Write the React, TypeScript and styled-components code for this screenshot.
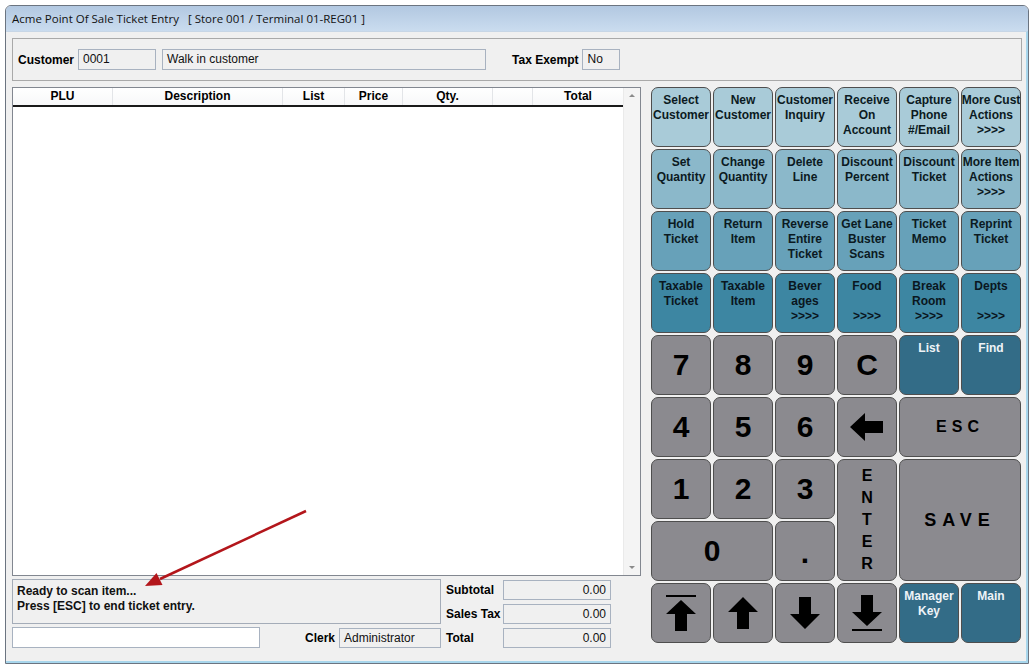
import React from "react";
import styled, { createGlobalStyle } from "styled-components";

const Global = createGlobalStyle`
  html, body { margin: 0; padding: 0; background: #ffffff; }
  body { font-family: "Liberation Sans", Arial, sans-serif; font-size: 12px; color: #000; }
`;

const Page = styled.div`
  position: relative;
  width: 1031px;
  height: 668px;
  overflow: hidden;
`;

const Window = styled.div`
  margin: 5px 0 0 5px;
  width: 1022px;
  height: 657px;
  border: 1px solid #6b7480;
  border-radius: 6px 6px 0 0;
  display: flex;
  flex-direction: column;
  background: #f0f0f0;
`;

const TitleBar = styled.div`
  height: 25px;
  flex: none;
  border-radius: 5px 5px 0 0;
  background: linear-gradient(#b2c8e1, #cadcef);
  display: flex;
  align-items: center;
  padding-left: 6px;
  font-family: "Open Sans", "Noto Sans", sans-serif;
  font-size: 11.5px;
  color: #111;
  white-space: pre;
`;

const Body = styled.div`
  flex: 1;
  display: flex;
  flex-direction: column;
  gap: 6px;
  padding: 6px 4px 0 6px;
  border-right: 2px solid #a8d6ec;
  border-bottom: 2px solid #a8d6ec;
  border-top: 1px solid #c7d6e6;
`;

const CustomerPanel = styled.div`
  height: 41px;
  border: 1px solid #a9a9a9;
  display: flex;
  align-items: center;
  padding: 0 5px;
  gap: 4px;
`;

const Label = styled.span<{ $ml?: number }>`
  font-weight: bold;
  font-size: 12px;
  margin-left: ${(p) => p.$ml ?? 0}px;
  white-space: nowrap;
`;

const Field = styled.div<{ $w: number; $h?: number; $right?: boolean; $white?: boolean; $ml?: number }>`
  width: ${(p) => p.$w}px;
  height: ${(p) => p.$h ?? 21}px;
  flex: none;
  box-sizing: border-box;
  border: 1px solid #a8b2c0;
  background: ${(p) => (p.$white ? "#ffffff" : "#f0f0f0")};
  font-size: 12px;
  line-height: ${(p) => (p.$h ?? 21) - 2}px;
  padding: 0 4px;
  text-align: ${(p) => (p.$right ? "right" : "left")};
  margin-left: ${(p) => p.$ml ?? 0}px;
  color: #111;
`;

const Main = styled.div`
  display: flex;
  gap: 10px;
  align-items: flex-start;
`;

const LeftCol = styled.div`
  width: 629px;
  display: flex;
  flex-direction: column;
  gap: 3px;
`;

const ItemGrid = styled.div`
  height: 489px;
  box-sizing: border-box;
  border: 1px solid #828790;
  background: #fff;
  display: flex;
`;

const GridMain = styled.div`
  flex: 1;
  display: flex;
  flex-direction: column;
`;

const HeaderRow = styled.div`
  display: flex;
  height: 17px;
  border-bottom: 2px solid #1a1a1a;
  background: linear-gradient(#ffffff, #f7f8f9);
`;

const HeaderCell = styled.div<{ $w: number }>`
  width: ${(p) => p.$w}px;
  box-sizing: border-box;
  border-right: 1px solid #e3e5e8;
  text-align: center;
  font-family: "Liberation Sans Narrow", "Liberation Sans", Arial, sans-serif;
  font-weight: bold;
  font-size: 12px;
  line-height: 17px;
  &:last-child { border-right: none; }
`;

const Scrollbar = styled.div`
  width: 17px;
  background: #f4f4f4;
  border-left: 1px solid #eaeaea;
  display: flex;
  flex-direction: column;
  justify-content: space-between;
  align-items: center;
  padding: 6px 0;
`;

const ScrollArrow = styled.div<{ $down?: boolean }>`
  width: 0;
  height: 0;
  border-left: 3px solid transparent;
  border-right: 3px solid transparent;
  ${(p) => (p.$down ? "border-top: 3px solid #8a8a8a;" : "border-bottom: 3px solid #8a8a8a;")}
`;

const BottomArea = styled.div`
  display: flex;
  gap: 5px;
`;

const BottomLeft = styled.div`
  width: 429px;
  display: flex;
  flex-direction: column;
  gap: 3px;
`;

const StatusBox = styled.div`
  height: 45px;
  box-sizing: border-box;
  border: 1px solid #a4acb8;
  padding: 4px 4px;
  font-weight: bold;
  font-size: 12px;
  line-height: 15px;
  color: #111;
`;

const ClerkRow = styled.div`
  display: flex;
  align-items: center;
  height: 21px;
`;

const Spacer = styled.div`
  flex: 1;
`;

const Totals = styled.div`
  display: grid;
  grid-template-columns: 57px 108px;
  row-gap: 4px;
  align-items: center;
  padding-top: 1px;
`;

const Pad = styled.div`
  display: grid;
  grid-template-columns: repeat(6, 60px);
  grid-template-rows: repeat(9, 60px);
  gap: 2px;
`;

const tones: Record<string, { bg: string; fg: string }> = {
  t1: { bg: "#a9cbd8", fg: "#0b1a22" },
  t2: { bg: "#8bb8ca", fg: "#0b1a22" },
  t3: { bg: "#67a1b9", fg: "#0b1a22" },
  t4: { bg: "#3d86a2", fg: "#0a1620" },
  dk: { bg: "#336c87", fg: "#eef3f7" },
  gr: { bg: "#8b8a8f", fg: "#000000" },
};

const Key = styled.div<{ $tone: string; $area?: string; $center?: boolean; $size?: number; $ls?: number }>`
  ${(p) => (p.$area ? `grid-area: ${p.$area};` : "")}
  box-sizing: border-box;
  border: 1px solid #4e4e4e;
  border-radius: 7px;
  background: ${(p) => tones[p.$tone].bg};
  color: ${(p) => tones[p.$tone].fg};
  font-weight: bold;
  font-size: ${(p) => p.$size ?? 12}px;
  letter-spacing: ${(p) => p.$ls ?? 0}px;
  line-height: ${(p) => ((p.$size ?? 12) > 12 ? "normal" : "15px")};
  text-align: center;
  display: flex;
  flex-direction: column;
  align-items: center;
  justify-content: ${(p) => (p.$center ? "center" : "flex-start")};
  padding-top: ${(p) => (p.$center ? 0 : 5)}px;
  white-space: nowrap;
  overflow: hidden;
`;

const DotKey = styled(Key)`
  justify-content: flex-end;
  padding-bottom: 10px;
`;

const KeyLine = styled.div`
  height: 15px;
`;

const EnterText = styled.div`
  font-size: 16px;
  line-height: 22px;
  display: flex;
  flex-direction: column;
  align-items: center;
`;

const Overlay = styled.svg`
  position: absolute;
  left: 0;
  top: 0;
  pointer-events: none;
`;

const UpArrow = ({ bar }: { bar?: boolean }) => (
  <svg width="32" height="36" viewBox="0 0 32 36">
    {bar && <rect x="1" y="0" width="30" height="2" fill="#000" />}
    <polygon points={bar ? "16,5 31,19 22,19 22,36 10,36 10,19 1,19" : "16,2 31,17 22,17 22,34 10,34 10,17 1,17"} fill="#000" />
  </svg>
);

const DownArrow = ({ bar }: { bar?: boolean }) => (
  <svg width="32" height="36" viewBox="0 0 32 36">
    <polygon points={bar ? "10,0 22,0 22,17 31,17 16,31 1,17 10,17" : "10,2 22,2 22,19 31,19 16,34 1,19 10,19"} fill="#000" />
    {bar && <rect x="1" y="34" width="30" height="2" fill="#000" />}
  </svg>
);

const LeftArrow = () => (
  <svg width="34" height="28" viewBox="0 0 34 28">
    <polygon points="0,14 15,0 15,8 33,8 33,20 15,20 15,28" fill="#000" />
  </svg>
);

const columns: [string, number][] = [
  ["PLU", 100],
  ["Description", 170],
  ["List", 62],
  ["Price", 58],
  ["Qty.", 90],
  ["", 40],
  ["Total", 90],
];

const fnKeys: { lines: string[]; tone: string }[] = [
  { lines: ["Select", "Customer"], tone: "t1" },
  { lines: ["New", "Customer"], tone: "t1" },
  { lines: ["Customer", "Inquiry"], tone: "t1" },
  { lines: ["Receive", "On", "Account"], tone: "t1" },
  { lines: ["Capture", "Phone", "#/Email"], tone: "t1" },
  { lines: ["More Cust", "Actions", ">>>>"], tone: "t1" },
  { lines: ["Set", "Quantity"], tone: "t2" },
  { lines: ["Change", "Quantity"], tone: "t2" },
  { lines: ["Delete", "Line"], tone: "t2" },
  { lines: ["Discount", "Percent"], tone: "t2" },
  { lines: ["Discount", "Ticket"], tone: "t2" },
  { lines: ["More Item", "Actions", ">>>>"], tone: "t2" },
  { lines: ["Hold", "Ticket"], tone: "t3" },
  { lines: ["Return", "Item"], tone: "t3" },
  { lines: ["Reverse", "Entire", "Ticket"], tone: "t3" },
  { lines: ["Get Lane", "Buster", "Scans"], tone: "t3" },
  { lines: ["Ticket", "Memo"], tone: "t3" },
  { lines: ["Reprint", "Ticket"], tone: "t3" },
  { lines: ["Taxable", "Ticket"], tone: "t4" },
  { lines: ["Taxable", "Item"], tone: "t4" },
  { lines: ["Bever", "ages", ">>>>"], tone: "t4" },
  { lines: ["Food", "", ">>>>"], tone: "t4" },
  { lines: ["Break", "Room", ">>>>"], tone: "t4" },
  { lines: ["Depts", "", ">>>>"], tone: "t4" },
];

const Digit = ({ v, area }: { v: string; area?: string }) => (
  <Key $tone="gr" $center $size={30} $area={area}>
    {v}
  </Key>
);

export default function App() {
  return (
    <Page>
      <Global />
      <Window>
        <TitleBar>{"Acme Point Of Sale Ticket Entry   [ Store 001 / Terminal 01-REG01 ]"}</TitleBar>
        <Body>
          <CustomerPanel>
            <Label>Customer</Label>
            <Field $w={78}>0001</Field>
            <Field $w={324} $ml={2}>Walk in customer</Field>
            <Label $ml={22}>Tax Exempt</Label>
            <Field $w={38}>No</Field>
          </CustomerPanel>
          <Main>
            <LeftCol>
              <ItemGrid>
                <GridMain>
                  <HeaderRow>
                    {columns.map(([n, w], i) => (
                      <HeaderCell key={i} $w={w}>
                        {n}
                      </HeaderCell>
                    ))}
                  </HeaderRow>
                </GridMain>
                <Scrollbar>
                  <ScrollArrow />
                  <ScrollArrow $down />
                </Scrollbar>
              </ItemGrid>
              <BottomArea>
                <BottomLeft>
                  <StatusBox>
                    Ready to scan item...
                    <br />
                    Press [ESC] to end ticket entry.
                  </StatusBox>
                  <ClerkRow>
                    <Field $w={248} $white />
                    <Spacer />
                    <Label>Clerk</Label>
                    <Field $w={102} $h={20} $ml={4}>
                      Administrator
                    </Field>
                  </ClerkRow>
                </BottomLeft>
                <Totals>
                  <Label>Subtotal</Label>
                  <Field $w={108} $h={20} $right>0.00</Field>
                  <Label>Sales Tax</Label>
                  <Field $w={108} $h={20} $right>0.00</Field>
                  <Label>Total</Label>
                  <Field $w={108} $h={20} $right>0.00</Field>
                </Totals>
              </BottomArea>
            </LeftCol>
            <Pad>
              {fnKeys.map((k, i) => (
                <Key key={i} $tone={k.tone}>
                  {k.lines.map((l, j) => (
                    <KeyLine key={j}>{l}</KeyLine>
                  ))}
                </Key>
              ))}
              <Digit v="7" />
              <Digit v="8" />
              <Digit v="9" />
              <Digit v="C" />
              <Key $tone="dk">List</Key>
              <Key $tone="dk">Find</Key>
              <Digit v="4" />
              <Digit v="5" />
              <Digit v="6" />
              <Key $tone="gr" $center>
                <LeftArrow />
              </Key>
              <Key $tone="gr" $center $size={16} $ls={5} $area="6 / 5 / 7 / 7">
                ESC
              </Key>
              <Digit v="1" />
              <Digit v="2" />
              <Digit v="3" />
              <Key $tone="gr" $center $area="7 / 4 / 9 / 5">
                <EnterText>
                  <span>E</span>
                  <span>N</span>
                  <span>T</span>
                  <span>E</span>
                  <span>R</span>
                </EnterText>
              </Key>
              <Key $tone="gr" $center $size={18} $ls={6} $area="7 / 5 / 9 / 7">
                SAVE
              </Key>
              <Digit v="0" area="8 / 1 / 9 / 3" />
              <DotKey $tone="gr" $center $size={30}>
                .
              </DotKey>
              <Key $tone="gr" $center>
                <UpArrow bar />
              </Key>
              <Key $tone="gr" $center>
                <UpArrow />
              </Key>
              <Key $tone="gr" $center>
                <DownArrow />
              </Key>
              <Key $tone="gr" $center>
                <DownArrow bar />
              </Key>
              <Key $tone="dk">
                <KeyLine>Manager</KeyLine>
                <KeyLine>Key</KeyLine>
              </Key>
              <Key $tone="dk">Main</Key>
            </Pad>
          </Main>
        </Body>
      </Window>
      <Overlay width="1031" height="668" viewBox="0 0 1031 668">
        <line x1="306" y1="511" x2="160" y2="579" stroke="#b3161b" strokeWidth="2.5" />
        <polygon points="145,586 162.5,585 156.5,573" fill="#b3161b" />
      </Overlay>
    </Page>
  );
}
